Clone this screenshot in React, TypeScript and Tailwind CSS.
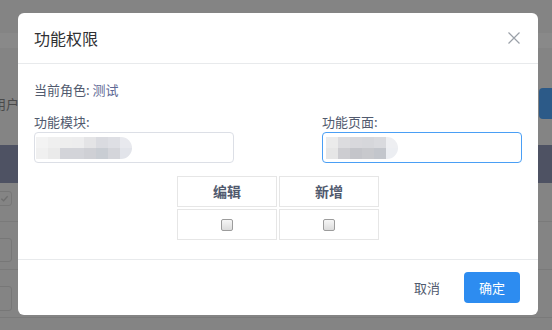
const leftBlur = [
  ['bg-[#f3f3f3]', 'bg-[#f0f0f0]'],
  ['bg-[#efefef]', 'bg-[#eaeaea]'],
  ['bg-[#eeeeee]', 'bg-[#d3d4d9]'],
  ['bg-[#ededee]', 'bg-[#d3d4d9]'],
  ['bg-[#e4e4e6]', 'bg-[#cfd0d5]'],
  ['bg-[#dadbe0]', 'bg-[#c9cdd3]'],
  ['bg-[#dedfe4]', 'bg-[#d4d5da]'],
  ['bg-[#e8e9ee]', 'bg-[#e2e4ea]'],
];

const rightBlur = [
  ['bg-[#ebebeb]', 'bg-[#e6e6e6]'],
  ['bg-[#dcdcdf]', 'bg-[#cdcdd1]'],
  ['bg-[#d8d8dc]', 'bg-[#c4c5ca]'],
  ['bg-[#d6d7db]', 'bg-[#c8c9cd]'],
  ['bg-[#d9dade]', 'bg-[#c3c6cc]'],
  ['bg-[#eeeff2]', 'bg-[#eceef2]'],
];

const Mosaic = ({ blocks }: { blocks: string[][] }) => (
  <div className="flex overflow-hidden rounded-r-full rounded-l-[6px] blur-[0.6px]">
    {blocks.map((b, i) => (
      <div key={i} className="flex w-[12px] flex-col">
        <div className={`h-[11px] ${b[0]}`} />
        <div className={`h-[11px] ${b[1]}`} />
      </div>
    ))}
  </div>
);

const Checkbox = () => (
  <span className="block h-[12px] w-[12px] rounded-[2px] border border-[#9c9c9c] bg-linear-to-b from-[#f6f6f6] to-[#dcdcdc]" />
);

export default function App() {
  return (
    <div className="relative h-[330px] w-[552px] overflow-hidden bg-[#848484] font-['Noto_Sans_CJK_SC','Liberation_Sans',sans-serif]">
      {/* page under the overlay */}
      <div className="flex flex-col">
        <div className="h-[33px]" />
        <div className="h-[15px] bg-[#898989]" />
        <div className="mt-[40px] flex h-[31px] items-center justify-between">
          <span className="-ml-[7px] text-[13px] text-[#4a4a4a]">用户名</span>
          <div className="-mr-[7px] h-[31px] w-[20px] rounded-[4px] bg-[#2c5a88]" />
        </div>
        <div className="mt-[26px] h-[38px] bg-[#4e5263]" />
        <div className="flex h-[39px] items-start border-b border-[#7a7a7a] pt-[8px]">
          <div className="-ml-[3px] flex h-[15px] w-[15px] items-center justify-center rounded-[3px] border border-[#777]">
            <svg width="9" height="9" viewBox="0 0 10 10" fill="none">
              <path d="M1.5 5.2 L4 7.5 L8.5 2.5" stroke="#6e6e6e" strokeWidth="1.4" />
            </svg>
          </div>
        </div>
        <div className="flex h-[48px] items-start border-b border-[#7a7a7a] pt-[16px]">
          <div className="-ml-[4px] h-[24px] w-[16px] rounded-[3px] border border-[#777]" />
        </div>
        <div className="flex h-[48px] items-start border-b border-[#7a7a7a] pt-[16px]">
          <div className="-ml-[4px] h-[25px] w-[16px] rounded-[3px] border border-[#777]" />
        </div>
      </div>

      {/* dialog */}
      <div className="absolute left-[18px] top-[13px] flex h-[302px] w-[520px] flex-col rounded-[6px] bg-white">
        <div className="flex h-[51px] items-center justify-between border-b border-[#e8eaec] pl-4 pr-[18px]">
          <span className="text-[16px] text-[#303133]">功能权限</span>
          <svg width="12" height="12" viewBox="0 0 12 12">
            <path d="M0.5 0.5 L11.5 11.5 M11.5 0.5 L0.5 11.5" stroke="#9aa0a8" strokeWidth="1.2" />
          </svg>
        </div>

        <div className="flex flex-1 flex-col px-4 pt-4">
          <div className="h-5 text-[13px] leading-5 text-[#515a6e]">
            当前角色: <span className="text-[#5d6894]">测试</span>
          </div>

          <div className="mt-3 flex justify-between">
            <div className="w-[200px]">
              <div className="h-5 text-[13px] leading-5 text-[#515a6e]">功能模块:</div>
              <div className="flex h-[31px] items-center rounded-[4px] border border-[#dcdfe6] px-[1px]">
                <Mosaic blocks={leftBlur} />
              </div>
            </div>
            <div className="w-[200px]">
              <div className="h-5 text-[13px] leading-5 text-[#515a6e]">功能页面:</div>
              <div className="flex h-[31px] items-center rounded-[4px] border border-[#4a9ff5] px-[3px]">
                <Mosaic blocks={rightBlur} />
              </div>
            </div>
          </div>

          <div className="mx-auto mt-[13px] grid grid-cols-[100px_100px] gap-[2px]">
            <div className="flex h-[31px] items-center justify-center border border-[#e6e6e6] text-[14px] font-bold text-[#515a6e]">编辑</div>
            <div className="flex h-[31px] items-center justify-center border border-[#e6e6e6] text-[14px] font-bold text-[#515a6e]">新增</div>
            <div className="flex h-[31px] items-center justify-center border border-[#e6e6e6]">
              <Checkbox />
            </div>
            <div className="flex h-[31px] items-center justify-center border border-[#e6e6e6]">
              <Checkbox />
            </div>
          </div>
        </div>

        <div className="flex h-[56px] items-center justify-end gap-2 border-t border-[#e8eaec] pr-[18px]">
          <button className="h-[31px] px-4 text-[13px] text-[#515a6e]">取消</button>
          <button className="h-[31px] w-[56px] rounded-[4px] bg-[#2d8cf0] text-[13px] text-white">确定</button>
        </div>
      </div>
    </div>
  );
}
